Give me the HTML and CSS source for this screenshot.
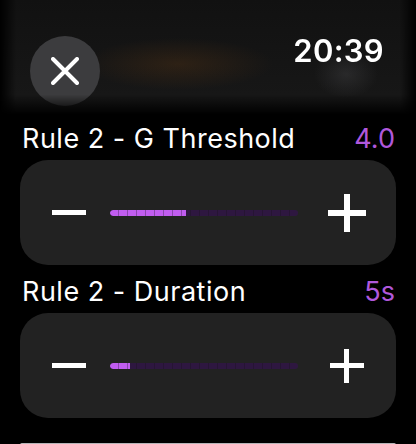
FILE: index.html
```html
<!DOCTYPE html>
<html>
<head>
<meta charset="utf-8">
<link rel="stylesheet" href="styles.css">
</head>
<body>
<div class="screen">
  <header class="header">
    <button class="close" aria-label="Close">
      <svg width="28" height="28" viewBox="0 0 28 28"><path d="M2 2 L26 26 M26 2 L2 26" stroke="#fff" stroke-width="4" stroke-linecap="round" fill="none"/></svg>
    </button>
    <div class="time">20:39</div>
  </header>

  <section class="setting">
    <div class="label-row"><span class="label">Rule 2 - G Threshold</span><span class="value">4.0</span></div>
    <div class="stepper">
      <span class="minus"></span>
      <div class="track"><div class="fill" style="width:76px"></div></div>
      <span class="plus big"></span>
    </div>
  </section>

  <section class="setting">
    <div class="label-row"><span class="label">Rule 2 - Duration</span><span class="value">5s</span></div>
    <div class="stepper">
      <span class="minus"></span>
      <div class="track"><div class="fill" style="width:20px"></div></div>
      <span class="plus small"></span>
    </div>
  </section>

  <div class="next"></div>
</div>
</body>
</html>
```
FILE: styles.css
```css
html, body {
  margin: 0;
  padding: 0;
  background: #000;
}
.screen {
  width: 416px;
  height: 444px;
  overflow: hidden;
  font-family: Inter, "Noto Sans", sans-serif;
  color: #fff;
  display: flex;
  flex-direction: column;
}
.header {
  height: 118px;
  flex: none;
  display: flex;
  justify-content: space-between;
  align-items: flex-start;
  padding: 36px 32px 0 30px;
  box-sizing: border-box;
  background:
    radial-gradient(ellipse 95px 26px at 178px 64px, rgba(85, 52, 20, 0.38), rgba(85,52,20,0) 100%),
    radial-gradient(ellipse 32px 24px at 346px 74px, rgba(110,110,115,0.22), rgba(110,110,115,0) 100%),
    linear-gradient(#111111, #171717 80%, #181818);
  -webkit-mask-image: linear-gradient(to bottom, #000 80%, transparent 97%),
    linear-gradient(to right, transparent 0, #000 16px, #000 400px, transparent 416px);
  -webkit-mask-composite: source-in;
  mask-image: linear-gradient(to bottom, #000 80%, transparent 97%),
    linear-gradient(to right, transparent 0, #000 16px, #000 400px, transparent 416px);
  mask-composite: intersect;
}
.close {
  width: 70px;
  height: 70px;
  border-radius: 50%;
  border: none;
  padding: 0;
  background: #3c3c3e;
  display: flex;
  align-items: center;
  justify-content: center;
}
.time {
  font-size: 31px;
  font-weight: 600;
  line-height: 32px;
  letter-spacing: 0.3px;
  margin-top: -1px;
}
.setting {
  padding: 0 20px;
}
.label-row {
  display: flex;
  justify-content: space-between;
  align-items: baseline;
  height: 42px;
  line-height: 42px;
}
.label {
  font-size: 27px;
  font-weight: 400;
  padding-left: 2px;
  letter-spacing: 0.5px;
}
.value {
  font-size: 27px;
  color: #b058dc;
  padding-right: 1px;
}
.stepper {
  height: 105px;
  background: #222222;
  border-radius: 28px;
  display: flex;
  align-items: center;
  padding: 0 30px 0 32px;
  margin-bottom: 6px;
}
.minus {
  width: 34px;
  height: 5px;
  background: #fff;
  flex: none;
}
.track {
  width: 188px;
  height: 6px;
  margin-left: 24px;
  flex: none;
  background: repeating-linear-gradient(to right, #2e1740 0 8px, #261533 8px 9px);
  border-radius: 3px;
  overflow: hidden;
}
.fill {
  height: 100%;
  background: repeating-linear-gradient(to right, #c15df0 0 8px, #8a45ad 8px 9px);
  border-radius: 3px 0 0 3px;
}
.plus {
  position: relative;
  flex: none;
  margin-left: auto;
}
.plus::before, .plus::after {
  content: "";
  position: absolute;
  background: #fff;
}
.plus.big { width: 38px; height: 38px; }
.plus.big::before { left: 0; right: 0; top: 16px; height: 6px; }
.plus.big::after { top: 0; bottom: 0; left: 16px; width: 6px; }
.plus.small { width: 34px; height: 34px; margin-right: 2px; }
.plus.small::before { left: 0; right: 0; top: 14px; height: 5px; }
.plus.small::after { top: 0; bottom: 0; left: 14px; width: 5px; }
.next {
  margin: 19px 20px 0;
  height: 20px;
  background: #b5b5b7;
  border-radius: 2px 2px 0 0;
  flex: none;
}
```
